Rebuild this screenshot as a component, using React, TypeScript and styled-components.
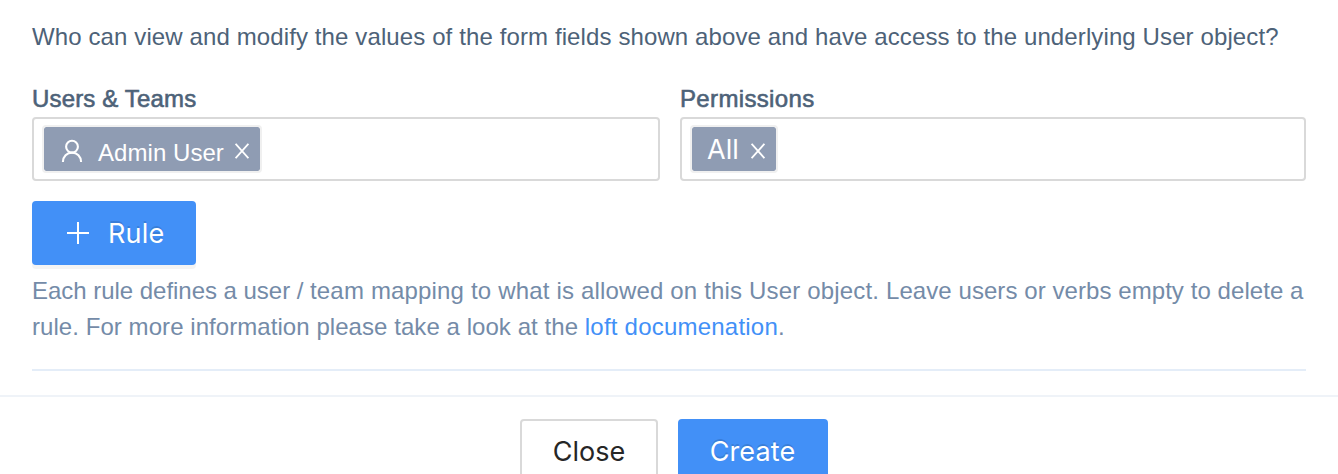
import React from "react";
import styled, { createGlobalStyle } from "styled-components";

const GlobalStyle = createGlobalStyle`
  * { box-sizing: border-box; }
  html, body { margin: 0; height: 100%; overflow: hidden; background: #fff; }
  body { font-family: "Liberation Sans", Arial, sans-serif; }
`;

const Modal = styled.div`
  height: 474px;
  overflow: hidden;
`;

const Body = styled.main`
  padding: 19px 32px 0;
  height: 395px;
`;

const Question = styled.p`
  margin: 0;
  height: 62px;
  font-size: 24px;
  line-height: 36px;
  letter-spacing: 0.113px;
  color: #4d6278;
  white-space: nowrap;
`;

const Fields = styled.div`
  display: grid;
  grid-template-columns: 628px 626px;
  column-gap: 20px;
`;

const Label = styled.div<{ $tracking: number }>`
  height: 36px;
  font-size: 24px;
  line-height: 36px;
  letter-spacing: ${(p) => p.$tracking}px;
  color: #4d6278;
  -webkit-text-stroke: 0.6px #4d6278;
`;

const Select = styled.div`
  display: flex;
  align-items: center;
  height: 64px;
  padding: 0 8px;
  border: 2px solid #d9d9d9;
  border-radius: 4px;
`;

const Tag = styled.span<{ $width: number }>`
  display: flex;
  align-items: center;
  width: ${(p) => p.$width}px;
  height: 48px;
  padding-left: 14px;
  border: 2px solid #f0f0f0;
  border-radius: 4px;
  background: #8f9cb3;
  background-clip: padding-box;
  color: #fff;
`;

const UserIcon = styled.svg`
  width: 28px;
  height: 28px;
  margin: 4px 12px 0 0;
  fill: none;
  stroke: currentColor;
  stroke-width: 2.1;
`;

const UserName = styled.span`
  width: 126px;
  margin: 7px 11px 0 0;
  font-size: 24px;
  line-height: 32px;
  letter-spacing: 0.05px;
  white-space: nowrap;
`;

const VerbName = styled.span`
  width: 33px;
  margin: 1px 11px 0 1px;
  font: 400 27px/44px Inter, sans-serif;
`;

const CloseIcon = styled.svg`
  display: block;
  width: 14px;
  height: 16px;
  margin-top: 4px;
  fill: none;
  stroke: currentColor;
  stroke-width: 1.9;
`;

const Button = styled.button<{ $primary?: boolean; $width: number }>`
  display: flex;
  align-items: center;
  justify-content: center;
  width: ${(p) => p.$width}px;
  height: 64px;
  padding: 2px 0 0;
  border: 2px solid ${(p) => (p.$primary ? "#4290f7" : "#d9d9d9")};
  border-radius: 4px;
  background: ${(p) => (p.$primary ? "#4290f7" : "#fff")};
  color: ${(p) => (p.$primary ? "#fff" : "#262626")};
  font: 400 27px/58px Inter, sans-serif;
  text-shadow: ${(p) => (p.$primary ? "0 -2px 0 rgba(0, 0, 0, 0.12)" : "none")};
  box-shadow: 0 4px 0 rgba(0, 0, 0, ${(p) => (p.$primary ? 0.045 : 0.015)});
`;

const AddRule = styled(Button)`
  margin-top: 20px;
  padding-left: 33px;
  justify-content: flex-start;
  gap: 19px;
  letter-spacing: 0.2px;
`;

const CreateButton = styled(Button)`
  padding-right: 1px;
  letter-spacing: 0.1px;
`;

const PlusIcon = styled.svg`
  width: 22px;
  height: 22px;
  margin-top: -2px;
  stroke: currentColor;
  stroke-width: 2;
`;

const Help = styled.p`
  margin: 8px 0 0;
  padding-bottom: 24px;
  border-bottom: 2px solid #e4edf8;
  font-size: 24px;
  line-height: 36px;
  color: #748ba8;
  white-space: nowrap;
`;

const Phrase = styled.span<{ $tracking: number }>`
  letter-spacing: ${(p) => p.$tracking}px;
`;

const Link = styled.a`
  color: #4290f7;
  letter-spacing: 0.22px;
`;

const Footer = styled.footer`
  display: flex;
  justify-content: center;
  gap: 20px;
  padding: 22px 0 0 10px;
  border-top: 2px solid #eff3f8;
`;

const Cross = () => (
  <CloseIcon viewBox="0 0 14 16">
    <path d="M.6 .8 13.4 15.2M13.4 .8 .6 15.2" />
  </CloseIcon>
);

export default function App() {
  return (
    <>
      <GlobalStyle />
      <Modal>
        <Body>
          <Question>
            Who can view and modify the values of the form fields shown above and have access to the underlying User object?
          </Question>
          <Fields>
            <div>
              <Label $tracking={0.16}>Users &amp; Teams</Label>
              <Select>
                <Tag $width={220}>
                  <UserIcon viewBox="0 0 28 28">
                    <circle cx="14" cy="9.7" r="5.9" />
                    <path d="M4.9 25a9.1 9.4 0 0 1 18.2 0" />
                  </UserIcon>
                  <UserName>Admin User</UserName>
                  <Cross />
                </Tag>
              </Select>
            </div>
            <div>
              <Label $tracking={0.35}>Permissions</Label>
              <Select>
                <Tag $width={88}>
                  <VerbName>All</VerbName>
                  <Cross />
                </Tag>
              </Select>
            </div>
          </Fields>
          <AddRule $primary $width={164}>
            <PlusIcon viewBox="0 0 22 22">
              <path d="M11 0v22M0 11h22" />
            </PlusIcon>
            Rule
          </AddRule>
          <Help>
            <Phrase $tracking={-0.03}>Each rule defines a user / </Phrase>
            <Phrase $tracking={0.17}>team mapping to what is allowed on this User object. </Phrase>
            <Phrase $tracking={0.07}>Leave users or verbs empty to delete a</Phrase>
            <br />
            <Phrase $tracking={0.06}>rule. For more information please take a look at the </Phrase>
            <Link>loft documenation</Link>.
          </Help>
        </Body>
        <Footer>
          <Button $width={138}>Close</Button>
          <CreateButton $primary $width={150}>Create</CreateButton>
        </Footer>
      </Modal>
    </>
  );
}
